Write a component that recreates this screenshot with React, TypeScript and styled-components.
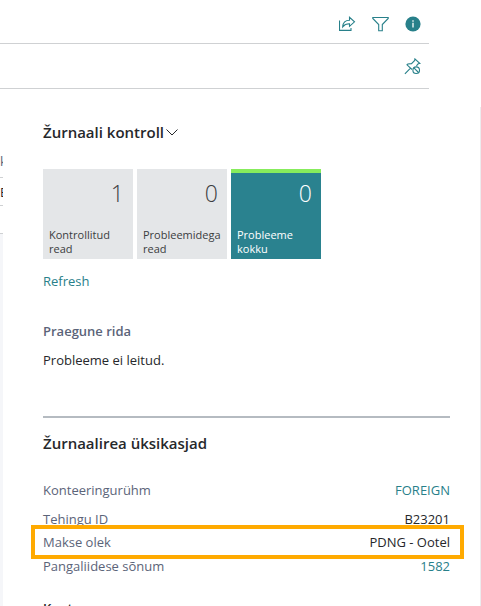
import React from "react";
import styled, { createGlobalStyle } from "styled-components";

const teal = "#28808a";
const slate = "#5b6479";
const ink = "#26282b";

const GlobalStyle = createGlobalStyle`
  * { box-sizing: border-box; }
  body {
    margin: 0;
    background: #fff;
    color: ${ink};
    font-family: "Open Sans", "Noto Sans", sans-serif;
    font-size: 13px;
    line-height: 20px;
  }
  button { font: inherit; border: 0; padding: 0; background: none; cursor: pointer; }
  h2, h3, p, dl, dd, dt { margin: 0; }
`;

const Page = styled.div`
  display: flex;
  flex-direction: column;
  height: 100vh;
  overflow: hidden;
`;

const Toolbar = styled.div<{ $tall?: boolean }>`
  display: flex;
  flex: none;
  align-items: center;
  justify-content: flex-end;
  gap: 16px;
  height: ${(p) => (p.$tall ? 45 : 44)}px;
  margin-right: 52px;
  padding: ${(p) => (p.$tall ? 0 : 4)}px 8px 0 0;
  border-bottom: 1px solid #cfd1d3;
`;

const IconButton = styled.button`
  display: flex;
  color: ${teal};
`;

const Body = styled.div`
  display: flex;
  flex: 1;
  min-height: 0;
  padding-top: 18px;
`;

const GridEdge = styled.div`
  display: flex;
  flex: none;
  flex-direction: column;
  width: 3px;
  padding-top: 43px;
  overflow: hidden;
`;

const GridCell = styled.div<{ $head?: boolean }>`
  flex: none;
  height: 28px;
  padding-top: ${(p) => (p.$head ? 1 : 4)}px;
  border-bottom: 1px solid #cfd1d3;
  color: ${(p) => (p.$head ? slate : ink)};
`;

const GridFill = styled.div`
  flex: 1;
  background: #f5f6f9;
`;

const Panel = styled.aside`
  flex: 1;
  min-width: 0;
  padding: 13px 30px 0 40px;
  border-right: 1px solid #ececee;
`;

const Title = styled.h2`
  font-size: 15px;
  font-weight: 600;
  line-height: 24px;
`;

const TitleButton = styled.button`
  display: flex;
  align-items: center;
  gap: 2px;
  color: inherit;
`;

const Tiles = styled.div`
  display: flex;
  gap: 4px;
  margin-top: 25px;
`;

const Tile = styled.button<{ $active?: boolean }>`
  display: flex;
  flex-direction: column;
  justify-content: space-between;
  width: 90px;
  height: 90px;
  padding: 5px 4px 3px 6px;
  border-top: 4px solid ${(p) => (p.$active ? "#87ec5c" : "#e4e6e8")};
  background: ${(p) => (p.$active ? "#2a828f" : "#e4e6e8")};
  color: ${(p) => (p.$active ? "#fff" : "#3b3d40")};
  font-size: 11px;
  line-height: 14px;
  text-align: left;
`;

const TileValue = styled.span`
  align-self: flex-end;
  padding-right: 5px;
  font-size: 23px;
  font-weight: 300;
  line-height: 30px;
`;

const TextLink = styled.a`
  color: ${teal};
  text-decoration: none;
`;

const Refresh = styled(TextLink)`
  display: block;
  margin-top: 12px;
`;

const Subtitle = styled.h3`
  color: ${slate};
  font-size: 13px;
  font-weight: 600;
  line-height: 20px;
`;

const Issues = styled.section`
  margin-top: 30px;
  padding-bottom: 46px;
  border-bottom: 2px solid #b5bbc1;
`;

const Message = styled.p`
  margin-top: 9px;
`;

const Details = styled.section`
  padding-top: 13px;
`;

const Fields = styled.dl`
  padding-top: 25px;
`;

const Field = styled.div`
  display: flex;
  justify-content: space-between;
  & + & { margin-top: 9px; }
  dt { color: ${slate}; }
`;

const HighlightedField = styled(Field)`
  position: relative;
  && { margin: -4px -14px -12px -12px; }
  padding: 3px 10px 3px 8px;
  border: 4px solid #ffaa00;
  background: #fff;
`;

const NextGroup = styled(Subtitle)`
  margin-top: 22px;
  color: ${ink};
`;

const ShareIcon = () => (
  <svg width="17" height="16" viewBox="0 0 17 16" fill="none" stroke="currentColor" strokeWidth="1.1">
    <path d="M.5 4.500v9.900h11.500v-2.500M3.700 10.800c.3-4 2.500-6.500 6.800-6.500V1.300L15.500 5.800l-5 4.500V7.700C7.500 7.600 5.500 8.500 3.700 10.800z" />
  </svg>
);

const FilterIcon = () => (
  <svg width="17" height="16" viewBox="0 0 17 16" fill="none" stroke="currentColor" strokeWidth="1.1">
    <path d="M.8 1.500h15.400v1L10.300 8.500v6.300H6.700V8.500L.8 2.500z" />
  </svg>
);

const InfoIcon = () => (
  <svg width="16" height="16" viewBox="0 0 16 16">
    <circle cx="8" cy="8" r="7.600" fill="currentColor" />
    <path d="M8 4.300v1.400M8 6.800v4.700" stroke="#fff" strokeWidth="1.300" />
  </svg>
);

const UnpinIcon = () => (
  <svg width="17" height="17" viewBox="0 0 17 17" fill="none" stroke="currentColor" strokeWidth="1.100">
    <path d="M.9 15.800l5.600-5.700M8 11.500L3 6.800l.8-.8 3.700-.4 3.200-3.100.2-1.600 5 4.600-1.700.3-1.800 2" />
    <circle cx="12.200" cy="12.200" r="3.300" />
    <path d="M9.900 9.900l4.600 4.600" />
  </svg>
);

const ChevronIcon = () => (
  <svg width="12" height="8" viewBox="0 0 12 8" fill="none" stroke="currentColor" strokeWidth="1">
    <path d="M.5 1.500L6 7 11.500 1.500" />
  </svg>
);

const tiles = [
  { value: 1, label: "Kontrollitud read" },
  { value: 0, label: "Probleemidega read" },
  { value: 0, label: "Probleeme kokku", active: true },
];

export default function App() {
  return (
    <Page>
      <GlobalStyle />
      <Toolbar>
        <IconButton aria-label="Jaga"><ShareIcon /></IconButton>
        <IconButton aria-label="Filtreeri"><FilterIcon /></IconButton>
        <IconButton aria-label="Teave"><InfoIcon /></IconButton>
      </Toolbar>
      <Toolbar $tall>
        <IconButton aria-label="Vabasta"><UnpinIcon /></IconButton>
      </Toolbar>
      <Body>
        <GridEdge>
          <GridCell $head>k</GridCell>
          <GridCell>E</GridCell>
          <GridCell />
          <GridFill />
        </GridEdge>
        <Panel>
          <Title>
            <TitleButton>Žurnaali kontroll<ChevronIcon /></TitleButton>
          </Title>
          <Tiles>
            {tiles.map((t) => (
              <Tile key={t.label} $active={t.active}>
                <TileValue>{t.value}</TileValue>
                <span>{t.label}</span>
              </Tile>
            ))}
          </Tiles>
          <Refresh href="#refresh">Refresh</Refresh>
          <Issues>
            <Subtitle>Praegune rida</Subtitle>
            <Message>Probleeme ei leitud.</Message>
          </Issues>
          <Details>
            <Title>Žurnaalirea üksikasjad</Title>
            <Fields>
              <Field>
                <dt>Konteeringurühm</dt>
                <dd><TextLink href="#foreign">FOREIGN</TextLink></dd>
              </Field>
              <Field>
                <dt>Tehingu ID</dt>
                <dd>B23201</dd>
              </Field>
              <HighlightedField>
                <dt>Makse olek</dt>
                <dd>PDNG - Ootel</dd>
              </HighlightedField>
              <Field>
                <dt>Pangaliidese sõnum</dt>
                <dd><TextLink href="#sonum">1582</TextLink></dd>
              </Field>
            </Fields>
            <NextGroup>Konto</NextGroup>
          </Details>
        </Panel>
      </Body>
    </Page>
  );
}
